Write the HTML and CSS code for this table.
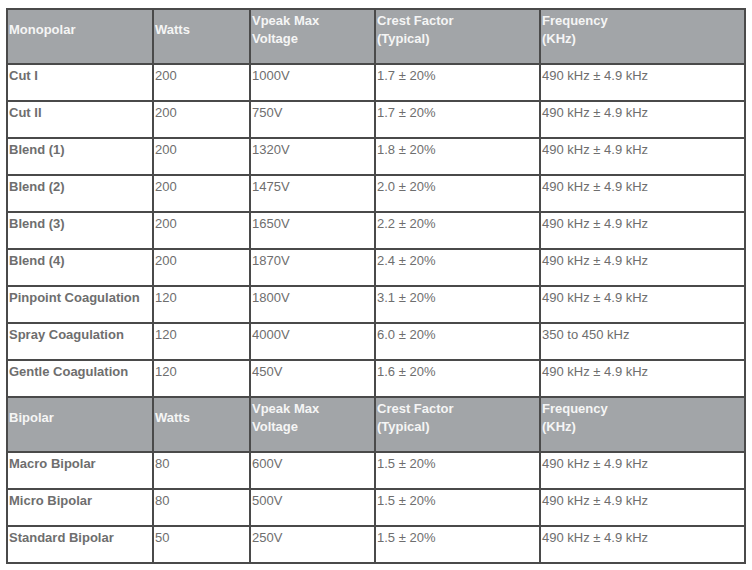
FILE: index.html
```html
<!DOCTYPE html>
<html>
<head>
<meta charset="utf-8">
<link rel="stylesheet" href="styles.css">
</head>
<body>
<table class="spec">
  <tr class="head">
    <td class="c1">Monopolar</td>
    <td class="c2">Watts</td>
    <td class="c3">Vpeak Max<br>Voltage</td>
    <td class="c4">Crest Factor<br>(Typical)</td>
    <td class="c5">Frequency<br>(KHz)</td>
  </tr>
  <tr><td class="c1 name">Cut I</td><td class="c2">200</td><td class="c3">1000V</td><td class="c4">1.7 ± 20%</td><td class="c5">490 kHz ± 4.9 kHz</td></tr>
  <tr><td class="c1 name">Cut II</td><td class="c2">200</td><td class="c3">750V</td><td class="c4">1.7 ± 20%</td><td class="c5">490 kHz ± 4.9 kHz</td></tr>
  <tr><td class="c1 name">Blend (1)</td><td class="c2">200</td><td class="c3">1320V</td><td class="c4">1.8 ± 20%</td><td class="c5">490 kHz ± 4.9 kHz</td></tr>
  <tr><td class="c1 name">Blend (2)</td><td class="c2">200</td><td class="c3">1475V</td><td class="c4">2.0 ± 20%</td><td class="c5">490 kHz ± 4.9 kHz</td></tr>
  <tr><td class="c1 name">Blend (3)</td><td class="c2">200</td><td class="c3">1650V</td><td class="c4">2.2 ± 20%</td><td class="c5">490 kHz ± 4.9 kHz</td></tr>
  <tr><td class="c1 name">Blend (4)</td><td class="c2">200</td><td class="c3">1870V</td><td class="c4">2.4 ± 20%</td><td class="c5">490 kHz ± 4.9 kHz</td></tr>
  <tr><td class="c1 name">Pinpoint Coagulation</td><td class="c2">120</td><td class="c3">1800V</td><td class="c4">3.1 ± 20%</td><td class="c5">490 kHz ± 4.9 kHz</td></tr>
  <tr><td class="c1 name">Spray Coagulation</td><td class="c2">120</td><td class="c3">4000V</td><td class="c4">6.0 ± 20%</td><td class="c5">350 to 450 kHz</td></tr>
  <tr><td class="c1 name">Gentle Coagulation</td><td class="c2">120</td><td class="c3">450V</td><td class="c4">1.6 ± 20%</td><td class="c5">490 kHz ± 4.9 kHz</td></tr>
  <tr class="head">
    <td class="c1">Bipolar</td>
    <td class="c2">Watts</td>
    <td class="c3">Vpeak Max<br>Voltage</td>
    <td class="c4">Crest Factor<br>(Typical)</td>
    <td class="c5">Frequency<br>(KHz)</td>
  </tr>
  <tr><td class="c1 name">Macro Bipolar</td><td class="c2">80</td><td class="c3">600V</td><td class="c4">1.5 ± 20%</td><td class="c5">490 kHz ± 4.9 kHz</td></tr>
  <tr><td class="c1 name">Micro Bipolar</td><td class="c2">80</td><td class="c3">500V</td><td class="c4">1.5 ± 20%</td><td class="c5">490 kHz ± 4.9 kHz</td></tr>
  <tr><td class="c1 name">Standard Bipolar</td><td class="c2">50</td><td class="c3">250V</td><td class="c4">1.5 ± 20%</td><td class="c5">490 kHz ± 4.9 kHz</td></tr>
</table>
</body>
</html>
```

FILE: styles.css
```css
html, body {
  margin: 0;
  padding: 0;
  background: #ffffff;
}

body {
  padding: 8px 0 0 6px;
  font-family: "Liberation Sans", Arial, sans-serif;
  font-size: 13px;
  color: #6e6e6e;
}

.spec {
  border-collapse: separate;
  border-spacing: 0;
  border: 1px solid #4a4a4a;
  table-layout: fixed;
  width: 740px;
}

.spec td {
  box-sizing: border-box;
  border: 1px solid #4a4a4a;
  padding: 2px 2px 15px 1px;
  line-height: 18px;
  vertical-align: top;
  white-space: nowrap;
}

.spec .c1 { width: 146px; }
.spec .c2 { width: 97px; }
.spec .c3 { width: 125px; }
.spec .c4 { width: 165px; }
.spec .c5 { width: 205px; }

.spec .name {
  font-weight: bold;
}

.spec .head td {
  background: #a2a5a8;
  color: #f5f5f5;
  font-weight: bold;
  vertical-align: middle;
  padding: 2px 2px 15px 1px;
}
```
